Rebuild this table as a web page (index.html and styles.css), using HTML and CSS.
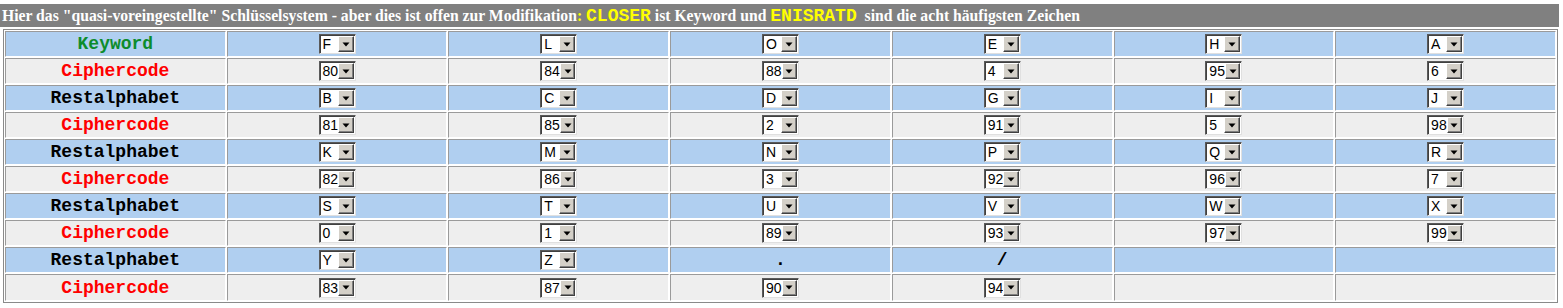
FILE: index.html
```html
<!DOCTYPE html>
<html lang="de">
<head>
<meta charset="utf-8">
<title>Schlüsselsystem</title>
<link rel="stylesheet" href="styles.css">
</head>
<body>
<div class="title">Hier das "quasi-voreingestellte" Schlüsselsystem - aber dies ist offen zur Modifikation<span class="colon">:</span> <span class="kw">CLOSER</span> ist Keyword und <span class="kw">ENISRATD</span>&nbsp; sind die acht häufigsten Zeichen</div>
<table class="grid">
<tbody id="rows"></tbody>
</table>
<script src="app.js"></script>
</body>
</html>
```
FILE: styles.css
```css
html, body { margin: 0; padding: 0; background: #ffffff; }
body { width: 1563px; }

.title {
  margin-top: 4px;
  width: 1557px;
  height: 23px;
  line-height: 23px;
  padding-left: 2px;
  background: #808080;
  color: #ffffff;
  font-family: "Liberation Serif", "Times New Roman", serif;
  font-weight: bold;
  font-size: 15.7px;
  white-space: nowrap;
  overflow: hidden;
}
.title .colon { color: #ffff00; }
.title .kw {
  color: #ffff00;
  font-family: "Liberation Mono", "Courier New", monospace;
  font-size: 18px;
  font-weight: bold;
}

.grid {
  margin: 2px 0 0 3px;
  width: 1555px;
  table-layout: fixed;
  border-collapse: separate;
  border-spacing: 1px;
  border: 1px solid #8a8a8a;
}
.grid td {
  height: 24px;
  padding: 0;
  text-align: center;
  vertical-align: middle;
  border: 1px solid;
  border-color: #9a9a9a #ffffff #ffffff #9a9a9a;
}
.grid tr:last-child td { height: 25px; }
.row-blue td { background: #b0cff0; }
.row-gray td { background: #eeeeee; }

.label {
  font-family: "Liberation Mono", "Courier New", monospace;
  font-weight: bold;
  font-size: 18px;
}
.label.green { color: #0d8c2c; }
.label.red { color: #ff0000; }
.label.black { color: #000000; }

.plain {
  font-family: "Liberation Mono", "Courier New", monospace;
  font-weight: bold;
  font-size: 18px;
  color: #000000;
}

.sel {
  display: inline-flex;
  align-items: center;
  box-sizing: border-box;
  width: 37px;
  height: 20px;
  vertical-align: middle;
  background: #ffffff;
  border: 1px solid;
  border-color: #5a5a5a #e0e0e0 #e0e0e0 #5a5a5a;
  box-shadow: inset 1px 1px 0 #404040;
  text-align: left;
}
.sel .val {
  flex: 1;
  padding-left: 3px;
  font-family: "Liberation Sans", Arial, sans-serif;
  font-size: 14px;
  line-height: 18px;
  color: #000000;
}
.sel .btn {
  display: flex;
  align-items: center;
  justify-content: center;
  box-sizing: border-box;
  width: 16px;
  height: 16px;
  margin-right: 1px;
  background: #d4d0c8;
  border: 1px solid;
  border-color: #ffffff #404040 #404040 #ffffff;
  box-shadow: inset -1px -1px 0 #808080;
}
.sel .btn svg { display: block; }
```
FILE: app.js
```js
var data = [
  ["green", "Keyword", ["F","L","O","E","H","A"], "blue"],
  ["red", "Ciphercode", ["80","84","88","4","95","6"], "gray"],
  ["black", "Restalphabet", ["B","C","D","G","I","J"], "blue"],
  ["red", "Ciphercode", ["81","85","2","91","5","98"], "gray"],
  ["black", "Restalphabet", ["K","M","N","P","Q","R"], "blue"],
  ["red", "Ciphercode", ["82","86","3","92","96","7"], "gray"],
  ["black", "Restalphabet", ["S","T","U","V","W","X"], "blue"],
  ["red", "Ciphercode", ["0","1","89","93","97","99"], "gray"],
  ["black", "Restalphabet", ["Y","Z","#.","#/","",""], "blue"],
  ["red", "Ciphercode", ["83","87","90","94","",""], "gray"]
];
var tri = '<svg width="8" height="5" viewBox="0 0 8 5"><path d="M0.5 0.5 H7.5 L4 4.5 Z" fill="#000"/></svg>';
var html = "";
data.forEach(function (r) {
  html += '<tr class="row-' + r[3] + '"><td><span class="label ' + r[0] + '">' + r[1] + '</span></td>';
  r[2].forEach(function (v) {
    if (v === "") { html += "<td></td>"; }
    else if (v.charAt(0) === "#") { html += '<td><span class="plain">' + v.slice(1) + '</span></td>'; }
    else { html += '<td><span class="sel"><span class="val">' + v + '</span><span class="btn">' + tri + '</span></span></td>'; }
  });
  html += "</tr>";
});
document.getElementById("rows").innerHTML = html;
```
